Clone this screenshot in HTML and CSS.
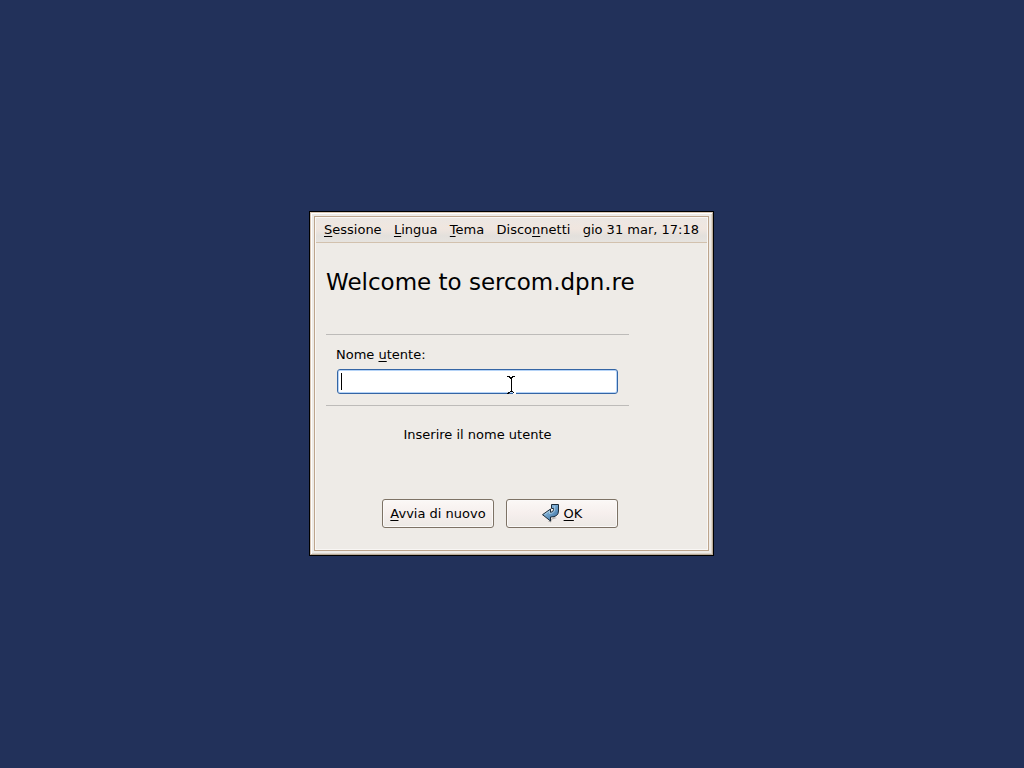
FILE: index.html
```html
<!DOCTYPE html>
<html lang="it">
<head>
<meta charset="utf-8">
<meta name="viewport" content="width=device-width, initial-scale=1">
<title>Welcome to sercom.dpn.re</title>
<link rel="stylesheet" href="styles.css">
</head>
<body>
<main class="window">
  <div class="bevel">
    <div class="frame">
      <nav class="menubar">
        <button type="button" class="menu"><u>S</u>essione</button>
        <button type="button" class="menu"><u>L</u>ingua</button>
        <button type="button" class="menu"><u>T</u>ema</button>
        <button type="button" class="menu">Disco<u>n</u>netti</button>
        <time class="clock">gio 31 mar, 17:18</time>
      </nav>
      <form class="login">
        <h1 class="title">Welcome to sercom.dpn.re</h1>
        <div class="entry">
          <label class="label" for="user">Nome <u>u</u>tente:</label>
          <div class="field">
            <input class="input" id="user" type="text" autocomplete="off">
            <span class="caret"></span>
            <svg class="pointer" width="9" height="18" viewBox="0 0 9 18" shape-rendering="crispEdges" aria-hidden="true">
              <path fill="#fff" d="M6 16h3v2H6z"/>
              <path d="M0 0h3v1H0zM5 0h3v1H5zM2 1h2v1H2zM4 1h2v1H4zM3 2h2v1H3zM4 2h1v14H4zM3 15h1v1H3zM5 15h1v1H5zM1 16h2v1H1zM6 16h1v1H6zM0 17h2v1H0z"/>
            </svg>
          </div>
        </div>
        <p class="message">Inserire il nome utente</p>
        <div class="actions">
          <button type="button" class="button"><span><u>A</u>vvia di nuovo</span></button>
          <button type="button" class="button">
            <svg class="icon" width="18" height="18" viewBox="0 1 18 18" aria-hidden="true">
              <defs>
                <linearGradient id="steel" x1="0" y1="0" x2="1" y2="1">
                  <stop offset="0" stop-color="#b4d2e8"/>
                  <stop offset=".5" stop-color="#6c9fc9"/>
                  <stop offset="1" stop-color="#36679a"/>
                </linearGradient>
              </defs>
              <path d="M6 17.500L9 18.500L10 15.500L15 14L12 13z" fill="#000" opacity=".25"/>
              <path d="M9.500 .500H16.500V7Q16.500 13 8.500 13V17L.500 10.700L8.500 5V8.300Q11.500 8.300 11.500 5.500V4.500H9.500z" fill="url(#steel)" stroke="#1c2c3a"/>
              <path d="M2.500 10.500L7.500 7V9.500Q12.500 9.500 12.700 5V2" fill="none" stroke="#c8dfed" opacity=".6"/>
            </svg>
            <span><u>O</u>K</span>
          </button>
        </div>
      </form>
    </div>
  </div>
</main>
</body>
</html>
```
FILE: styles.css
```css
* {
  box-sizing: border-box;
}

body {
  margin: 0;
  padding: 0 1px 1px 0;
  min-height: 100vh;
  display: flex;
  align-items: center;
  justify-content: center;
  background: #22315a;
  color: #000;
  font: 13px/16px "DejaVu Sans", Verdana, sans-serif;
}

u {
  text-decoration: underline;
  text-decoration-thickness: 1px;
  text-underline-offset: 2px;
  text-decoration-skip-ink: none;
}

.window {
  width: min(405px, 100%);
  border: 1px solid #000;
}

.bevel {
  padding: 3px;
  border: 1px solid;
  border-color: #d9c6b4 #b9aa97 #b9aa97 #d9c6b4;
  background: #eeebe7;
  box-shadow: inset 1px 1px #fff, inset -1px -1px #dcd5cb;
}

.frame {
  border: 1px solid #bda58d;
  padding: 1px;
  background: #eeebe7;
  box-shadow: inset 0 0 0 1px #f9f7f5;
}

.menubar {
  display: flex;
  align-items: center;
  justify-content: space-between;
  height: 25px;
  padding: 0 8px;
  border-bottom: 1px solid #d2c1ae;
  background: linear-gradient(#ece7e3, #f0e6df 45%, #e3e0dc 75%, #e6e3df);
}

.menu {
  margin: 0;
  padding: 0;
  border: 0;
  background: none;
  color: inherit;
  font: inherit;
}

.login {
  display: flex;
  flex-direction: column;
  margin: 0 78px 0 10px;
  padding: 24px 0 21px;
}

.title {
  margin: 0 0 36px;
  font-size: 23px;
  font-weight: 400;
  line-height: 31px;
  white-space: nowrap;
}

.entry {
  display: flex;
  flex-direction: column;
  gap: 6px;
  padding: 12px 11px 11px 10px;
  border-top: 1px solid #bdbbb9;
  border-bottom: 1px solid #bdbbb9;
}

.field {
  position: relative;
  display: flex;
  margin-left: 1px;
}

.input {
  flex: 1;
  min-width: 0;
  height: 25px;
  padding: 0 5px;
  border: 1px solid #3465a4;
  border-radius: 3px;
  outline: 0;
  background: #fff;
  box-shadow: inset 0 0 0 1px #b5d3f7;
  font: inherit;
}

.caret {
  position: absolute;
  left: 4px;
  top: 4px;
  width: 1px;
  height: 17px;
  background: #000;
}

.pointer {
  position: absolute;
  left: 170px;
  top: 7px;
}

.message {
  margin: 21px 0 56px;
  text-align: center;
}

.actions {
  display: flex;
  justify-content: flex-end;
  gap: 12px;
  padding-right: 11px;
}

.button {
  display: flex;
  flex: 0 0 112px;
  align-items: center;
  justify-content: center;
  gap: 4px;
  height: 29px;
  padding: 0;
  border: 1px solid #7d7265;
  border-radius: 3px;
  background: linear-gradient(#fbf8f6, #f6efed 50%, #ece9e5);
  box-shadow: inset 0 0 0 1px #fbf9f8;
  color: inherit;
  font: inherit;
}

.icon {
  overflow: visible;
}
```
